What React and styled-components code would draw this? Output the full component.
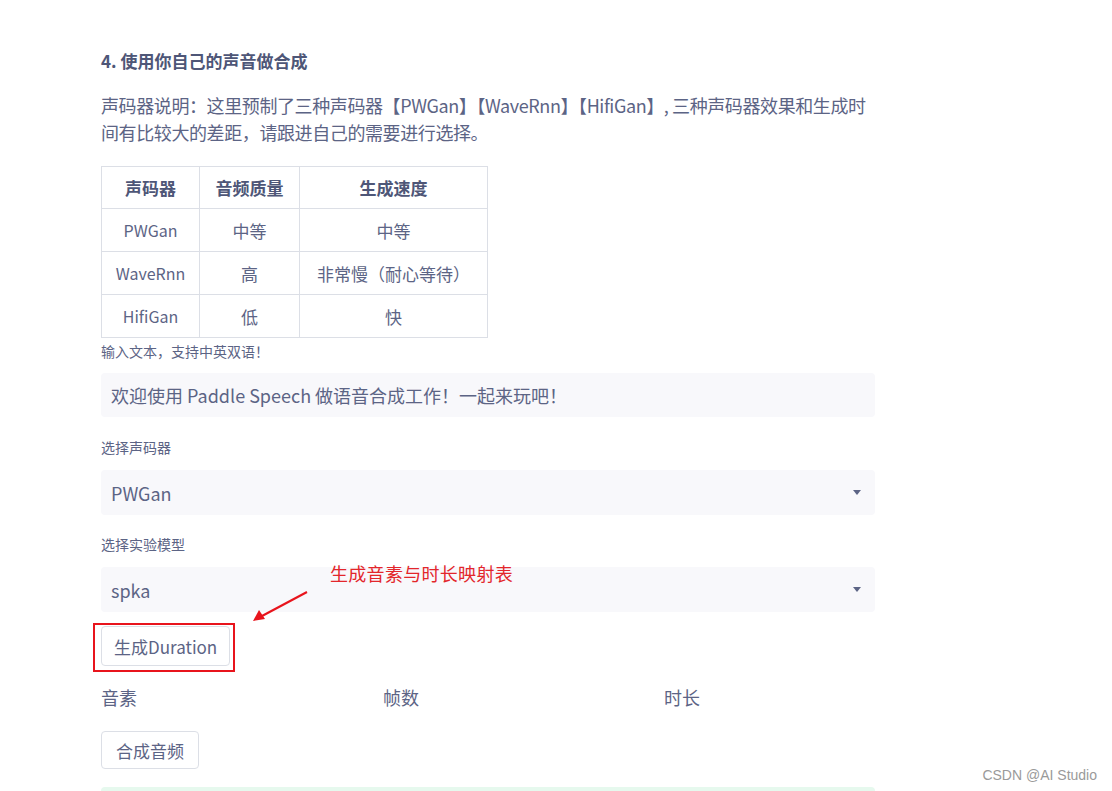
import React from "react";
import styled, { createGlobalStyle } from "styled-components";

const GlobalStyle = createGlobalStyle`
  body {
    margin: 0;
    background: #ffffff;
    font-family: "Noto Sans CJK SC", "Noto Sans", sans-serif;
    color: #5c6485;
  }
`;

const Page = styled.div`
  position: relative;
  width: 1112px;
  height: 791px;
  overflow: hidden;
`;

const Main = styled.div`
  display: flex;
  flex-direction: column;
  align-items: flex-start;
  width: 774px;
  padding: 48px 0 0 101px;
`;

const Heading = styled.h4`
  margin: 0;
  font-size: 17px;
  line-height: 26px;
  font-weight: 700;
  color: #4e5677;
`;

const Paragraph = styled.p`
  margin: 18px 0 0;
  font-size: 18px;
  line-height: 27px;
  letter-spacing: -0.4px;
  width: 774px;
`;

const Table = styled.table`
  margin-top: 20px;
  border-collapse: collapse;
  font-size: 17px;
`;

const Th = styled.th`
  border: 1px solid #dcdfe6;
  height: 41px;
  padding: 0;
  font-weight: 700;
  color: #4e5677;
  width: ${(p) => p.w}px;
`;

const Td = styled.td`
  border: 1px solid #dcdfe6;
  height: 42px;
  padding: 0;
  text-align: center;
  font-size: ${(p) => (p.latin ? 16 : 17)}px;
`;

const Caption = styled.div`
  margin-top: 3px;
  font-size: 14px;
  line-height: 20px;
`;

const Label = styled.div`
  margin-top: ${(p) => p.mt}px;
  font-size: 14px;
  line-height: 20px;
`;

const Field = styled.div`
  box-sizing: border-box;
  margin-top: ${(p) => p.mt}px;
  width: 774px;
  height: ${(p) => p.h}px;
  display: flex;
  align-items: center;
  justify-content: space-between;
  padding: 0 14px 0 10px;
  background: #f8f8fb;
  border-radius: 4px;
  font-size: 18px;
`;

const Caret = styled.span`
  width: 0;
  height: 0;
  border-left: 4px solid transparent;
  border-right: 4px solid transparent;
  border-top: 5px solid #5c6485;
`;

const ButtonFrame = styled.div`
  position: relative;
  margin-top: ${(p) => p.mt}px;
  ${(p) =>
    p.marked &&
    `
    &::after {
      content: "";
      position: absolute;
      left: -8px;
      top: -3px;
      right: -5px;
      bottom: -6px;
      border: 2px solid #e8141c;
    }
  `}
`;

const Button = styled.button`
  box-sizing: border-box;
  height: ${(p) => p.h}px;
  padding: 0 ${(p) => p.px}px;
  background: #ffffff;
  border: 1px solid #dcdfe6;
  border-radius: 4px;
  font-family: inherit;
  font-size: 17px;
  color: #5c6485;
`;

const Columns = styled.div`
  margin-top: 18px;
  display: grid;
  grid-template-columns: 282px 281px 200px;
  font-size: 18px;
  line-height: 26px;
`;

const SuccessBox = styled.div`
  margin-top: 18px;
  width: 774px;
  height: 40px;
  background: #e6f9ee;
  border-radius: 4px;
`;

const Note = styled.div`
  position: absolute;
  left: 330px;
  top: 561px;
  font-size: 18px;
  line-height: 24px;
  color: #e3262b;
  letter-spacing: 0.3px;
`;

const Arrow = styled.svg`
  position: absolute;
  left: 248px;
  top: 586px;
`;

const Watermark = styled.div`
  position: absolute;
  right: 15px;
  top: 767px;
  font-family: "Liberation Sans", Arial, sans-serif;
  font-size: 14px;
  color: #9a9a9a;
`;

const rows = [
  ["PWGan", "中等", "中等"],
  ["WaveRnn", "高", "非常慢（耐心等待）"],
  ["HifiGan", "低", "快"],
];

export default function App() {
  return (
    <Page>
      <GlobalStyle />
      <Main>
        <Heading>4. 使用你自己的声音做合成</Heading>
        <Paragraph>
          声码器说明：这里预制了三种声码器【PWGan】【WaveRnn】【HifiGan】, 三种声码器效果和生成时间有比较大的差距，请跟进自己的需要进行选择。
        </Paragraph>
        <Table>
          <thead>
            <tr>
              <Th w={97}>声码器</Th>
              <Th w={99}>音频质量</Th>
              <Th w={187}>生成速度</Th>
            </tr>
          </thead>
          <tbody>
            {rows.map((r) => (
              <tr key={r[0]}>
                {r.map((c, i) => (
                  <Td key={i} latin={i === 0}>
                    {c}
                  </Td>
                ))}
              </tr>
            ))}
          </tbody>
        </Table>
        <Caption>输入文本，支持中英双语！</Caption>
        <Field mt={12} h={44}>欢迎使用 Paddle Speech 做语音合成工作！一起来玩吧！</Field>
        <Label mt={20}>选择声码器</Label>
        <Field mt={13} h={45}>
          PWGan
          <Caret />
        </Field>
        <Label mt={19}>选择实验模型</Label>
        <Field mt={13} h={45}>
          spka
          <Caret />
        </Field>
        <ButtonFrame mt={14} marked>
          <Button h={40} px={12}>生成Duration</Button>
        </ButtonFrame>
        <Columns>
          <span>音素</span>
          <span>帧数</span>
          <span>时长</span>
        </Columns>
        <ButtonFrame mt={21}>
          <Button h={38} px={14}>合成音频</Button>
        </ButtonFrame>
        <SuccessBox />
      </Main>
      <Note>生成音素与时长映射表</Note>
      <Arrow width="64" height="40" viewBox="0 0 64 40">
        <line x1="59" y1="6" x2="14" y2="30" stroke="#e8141c" strokeWidth="2" />
        <polygon points="5,35 11,24 17,33" fill="#e8141c" />
      </Arrow>
      <Watermark>CSDN @AI Studio</Watermark>
    </Page>
  );
}
